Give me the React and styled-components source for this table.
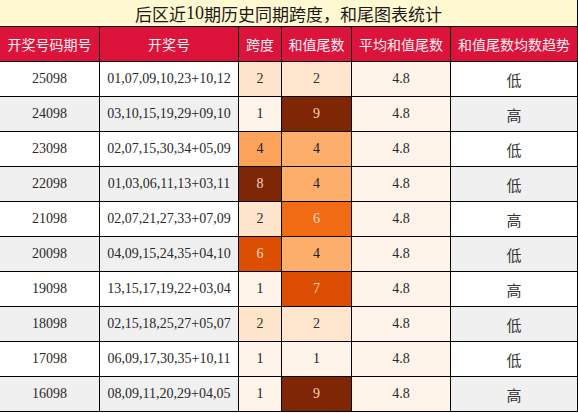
import React from 'react';
import styled, { createGlobalStyle } from 'styled-components';

const GlobalStyle = createGlobalStyle`
  html, body {
    margin: 0;
    padding: 0;
    background: #ffffff;
  }
  * {
    box-sizing: border-box;
  }
`;

// 开奖数据
const rows = [
  { issue: '25098', nums: '01,07,09,10,23+10,12', span: 2, tail: 2, trend: '低' },
  { issue: '24098', nums: '03,10,15,19,29+09,10', span: 1, tail: 9, trend: '高' },
  { issue: '23098', nums: '02,07,15,30,34+05,09', span: 4, tail: 4, trend: '低' },
  { issue: '22098', nums: '01,03,06,11,13+03,11', span: 8, tail: 4, trend: '低' },
  { issue: '21098', nums: '02,07,21,27,33+07,09', span: 2, tail: 6, trend: '高' },
  { issue: '20098', nums: '04,09,15,24,35+04,10', span: 6, tail: 4, trend: '低' },
  { issue: '19098', nums: '13,15,17,19,22+03,04', span: 1, tail: 7, trend: '高' },
  { issue: '18098', nums: '02,15,18,25,27+05,07', span: 2, tail: 2, trend: '低' },
  { issue: '17098', nums: '06,09,17,30,35+10,11', span: 1, tail: 1, trend: '低' },
  { issue: '16098', nums: '08,09,11,20,29+04,05', span: 1, tail: 9, trend: '高' },
];

const spanColors = {
  1: ['#fff4ea', '#222'],
  2: ['#fee4cb', '#333'],
  4: ['#fda25a', '#222'],
  6: ['#dc4f03', '#fbd6bd'],
  8: ['#7f2704', '#f6d2be'],
};

const tailColors = {
  1: ['#fff4ea', '#222'],
  2: ['#fee6cf', '#333'],
  4: ['#fdae6b', '#222'],
  6: ['#f16a14', '#fcdcc4'],
  7: ['#dd4d03', '#fbd6bd'],
  9: ['#7f2704', '#f6d2be'],
};

const Table = styled.div`
  width: 578px;
  display: grid;
  grid-template-columns: 100px 139px 43px 70px 99px 127px;
  font-family: "Liberation Serif", "Noto Sans CJK SC", serif;
`;

const Title = styled.div`
  grid-column: 1 / -1;
  height: 27px;
  background: #fff8d0;
  border-right: 1px solid #000;
  border-bottom: 1px solid #000;
  display: flex;
  align-items: center;
  justify-content: center;
  font-family: "Noto Sans CJK SC", sans-serif;
  font-size: 17px;
  color: #1a1a1a;
  padding-top: 1px;

  span {
    font-family: "Liberation Serif", serif;
    font-size: 18px;
  }
`;

const Head = styled.div`
  height: 35px;
  background: #dc143c;
  color: #fdf0f2;
  border-right: 1px solid #000;
  border-bottom: 1px solid #000;
  display: flex;
  align-items: center;
  justify-content: center;
  font-family: "Noto Sans CJK SC", sans-serif;
  font-size: 14px;
`;

const Cell = styled.div`
  height: 35px;
  background: ${p => p.$bg || '#fff'};
  color: ${p => p.$fg || '#2a2a2a'};
  border-right: 1px solid #000;
  border-bottom: 1px solid #000;
  display: flex;
  align-items: center;
  justify-content: center;
  font-size: 14px;
`;

const Trend = styled(Cell)`
  font-family: "Noto Sans CJK SC", sans-serif;
  font-size: 15px;
  color: #333;
`;

const heads = ['开奖号码期号', '开奖号', '跨度', '和值尾数', '平均和值尾数', '和值尾数均数趋势'];

export default function App() {
  return (
    <>
      <GlobalStyle />
      <Table>
        <Title>后区近<span>10</span>期历史同期跨度，和尾图表统计</Title>
        {heads.map(h => <Head key={h}>{h}</Head>)}
        {rows.map((r, i) => {
          const stripe = i % 2 === 1 ? '#f0f0f0' : '#ffffff';
          const [sBg, sFg] = spanColors[r.span];
          const [tBg, tFg] = tailColors[r.tail];
          return (
            <React.Fragment key={r.issue}>
              <Cell $bg={stripe}>{r.issue}</Cell>
              <Cell $bg={stripe}>{r.nums}</Cell>
              <Cell $bg={sBg} $fg={sFg}>{r.span}</Cell>
              <Cell $bg={tBg} $fg={tFg}>{r.tail}</Cell>
              <Cell $bg="#fff4ea">4.8</Cell>
              <Trend $bg={stripe}>{r.trend}</Trend>
            </React.Fragment>
          );
        })}
      </Table>
    </>
  );
}
